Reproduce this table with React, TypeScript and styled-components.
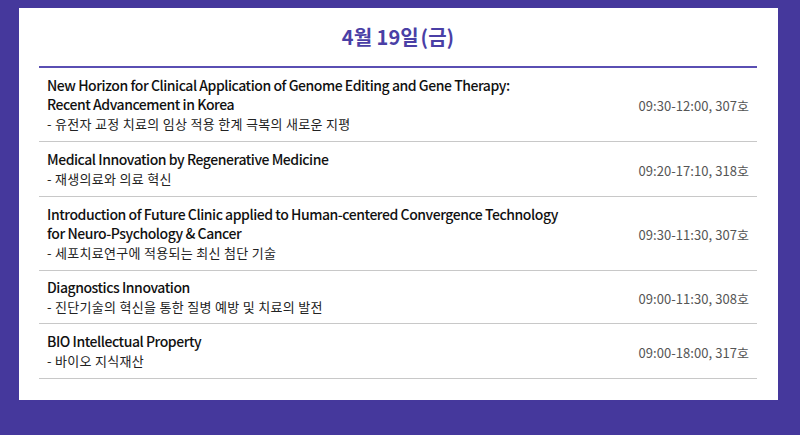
import React from "react";
import styled, { createGlobalStyle } from "styled-components";

const Global = createGlobalStyle`
  html, body { margin: 0; padding: 0; }
  body {
    background: #45389c;
    font-family: "Noto Sans CJK KR", "Noto Sans", sans-serif;
    width: 800px;
    height: 435px;
    overflow: hidden;
  }
`;

const Page = styled.div`
  width: 800px;
  height: 435px;
  box-sizing: border-box;
  padding: 8px 22px 0 19px;
`;

const Card = styled.section`
  background: #ffffff;
  height: 392px;
  box-sizing: border-box;
  padding: 0 21px 0 20px;
`;

const Title = styled.h2`
  margin: 0;
  height: 60px;
  display: flex;
  align-items: center;
  justify-content: center;
  padding-bottom: 2px;
  box-sizing: border-box;
  font-size: 20px;
  font-weight: 700;
  color: #4a3fa6;
  letter-spacing: 0;
  border-bottom: 2px solid #5a4fb3;
`;

const Paren = styled.span`
  margin-left: 2px;
`;

const List = styled.ul`
  list-style: none;
  margin: 0;
  padding: 0;
`;

const Row = styled.li<{ $tight?: boolean }>`
  display: flex;
  align-items: center;
  justify-content: space-between;
  padding: ${(p) => (p.$tight ? "7px 8px 7px 8px" : "8px 8px 8px 8px")};
  border-bottom: 1px solid #c8c8c8;
`;

const Info = styled.div`
  display: flex;
  flex-direction: column;
`;

const Name = styled.div`
  font-size: 14px;
  line-height: 19px;
  font-weight: 500;
  color: #111;
  letter-spacing: -0.45px;
`;

const Sub = styled.div`
  font-size: 13px;
  line-height: 19px;
  color: #222;
  letter-spacing: 0.3px;
`;

const Time = styled.div`
  font-size: 13px;
  color: #555;
  white-space: nowrap;
  letter-spacing: 0.05px;
  padding-top: 2px;
`;

type Session = { name: string[]; sub: string; time: string; tight?: boolean };

const sessions: Session[] = [
  {
    name: [
      "New Horizon for Clinical Application of Genome Editing and Gene Therapy:",
      "Recent Advancement in Korea",
    ],
    sub: "- 유전자 교정 치료의 임상 적용 한계 극복의 새로운 지평",
    time: "09:30-12:00, 307호",
  },
  {
    name: ["Medical Innovation by Regenerative Medicine"],
    sub: "- 재생의료와 의료 혁신",
    time: "09:20-17:10, 318호",
  },
  {
    name: [
      "Introduction of Future Clinic applied to Human-centered Convergence Technology",
      "for Neuro-Psychology & Cancer",
    ],
    sub: "- 세포치료연구에 적용되는 최신 첨단 기술",
    time: "09:30-11:30, 307호",
  },
  {
    name: ["Diagnostics Innovation"],
    sub: "- 진단기술의 혁신을 통한 질병 예방 및 치료의 발전",
    time: "09:00-11:30, 308호",
    tight: true,
  },
  {
    name: ["BIO Intellectual Property"],
    sub: "- 바이오 지식재산",
    time: "09:00-18:00, 317호",
  },
];

export default function App() {
  return (
    <>
      <Global />
      <Page>
        <Card>
          <Title>
            4월 19일<Paren>(금)</Paren>
          </Title>
          <List>
            {sessions.map((s, i) => (
              <Row key={i} $tight={s.tight}>
                <Info>
                  {s.name.map((n, j) => (
                    <Name key={j}>{n}</Name>
                  ))}
                  <Sub>{s.sub}</Sub>
                </Info>
                <Time>{s.time}</Time>
              </Row>
            ))}
          </List>
        </Card>
      </Page>
    </>
  );
}
